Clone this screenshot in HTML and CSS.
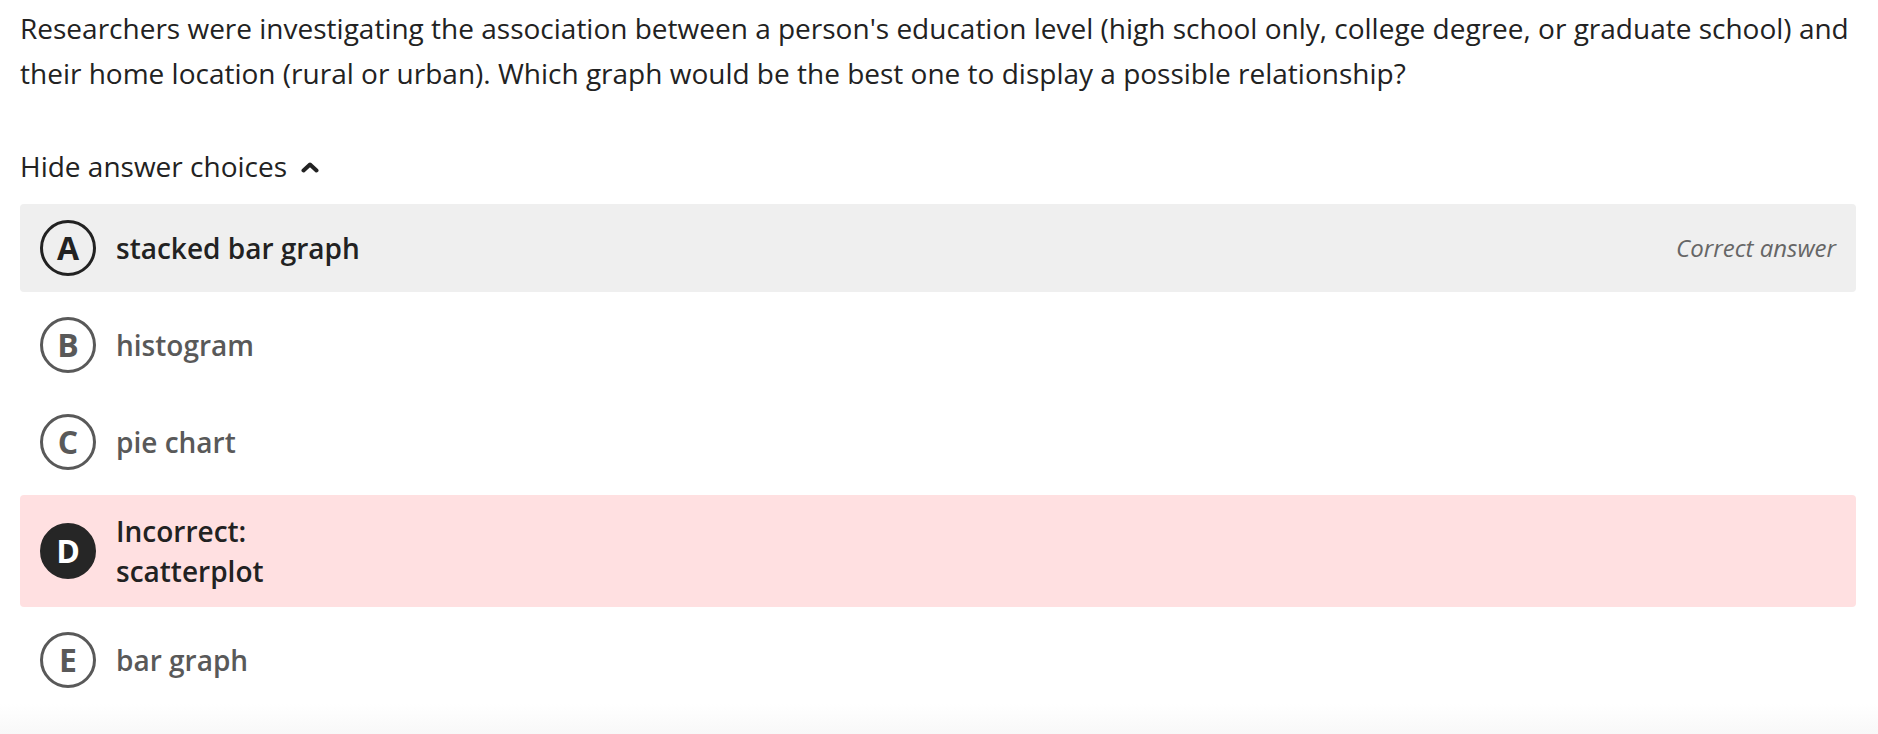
FILE: index.html
```html
<!DOCTYPE html>
<html lang="en">
<head>
<meta charset="utf-8">
<title>Question</title>
<link rel="stylesheet" href="styles.css">
</head>
<body>
<main class="page">
  <p class="question">Researchers were investigating the association between a person's education level (high school only, college degree, or graduate school) and their home location (rural or urban). Which graph would be the best one to display a possible relationship?</p>
  <button class="toggle" type="button">
    <span>Hide answer choices</span>
    <svg class="chevron" width="18" height="12" viewBox="0 0 18 12" aria-hidden="true"><polyline points="2.5,9.5 9,3.5 15.5,9.5" fill="none" stroke="#222" stroke-width="4" stroke-linecap="round" stroke-linejoin="round"/></svg>
  </button>
  <ul class="choices">
    <li class="choice choice--correct">
      <span class="badge badge--dark">A</span>
      <span class="label">stacked bar graph</span>
      <span class="note">Correct answer</span>
    </li>
    <li class="choice">
      <span class="badge">B</span>
      <span class="label">histogram</span>
    </li>
    <li class="choice">
      <span class="badge">C</span>
      <span class="label">pie chart</span>
    </li>
    <li class="choice choice--wrong">
      <span class="badge badge--filled">D</span>
      <span class="label label--stack"><span>Incorrect:</span><span>scatterplot</span></span>
    </li>
    <li class="choice">
      <span class="badge">E</span>
      <span class="label">bar graph</span>
    </li>
  </ul>
</main>
</body>
</html>
```
FILE: styles.css
```css
html, body {
  margin: 0;
  padding: 0;
}
body {
  font-family: "Open Sans", "Noto Sans", sans-serif;
  color: #222;
  background: linear-gradient(to bottom, #fff 0, #fff 704px, #f8f8f8 734px);
  min-height: 734px;
}
.page {
  padding: 6px 22px 0 20px;
}
.question {
  margin: 0;
  font-size: 28px;
  line-height: 45px;
  color: #222;
}
.toggle {
  display: flex;
  align-items: center;
  gap: 14px;
  margin: 50px 0 0;
  padding: 0;
  border: 0;
  background: none;
  font: inherit;
  font-size: 28px;
  line-height: 40px;
  color: #222;
}
.chevron {
  display: block;
  margin-top: 2px;
}
.choices {
  list-style: none;
  margin: 18px 0 0;
  padding: 0;
  display: flex;
  flex-direction: column;
  gap: 9px;
}
.choice {
  display: flex;
  align-items: center;
  gap: 20px;
  padding: 16px 20px;
  border-radius: 4px;
  font-size: 28px;
  font-weight: 600;
  line-height: 40px;
  color: #595959;
}
.choice--correct {
  background: #efefef;
  color: #222;
}
.choice--wrong {
  background: #ffe0e1;
  color: #222;
}
.badge {
  flex: none;
  box-sizing: border-box;
  width: 56px;
  height: 56px;
  border: 3px solid #595959;
  border-radius: 50%;
  display: flex;
  align-items: center;
  justify-content: center;
  font-size: 32px;
  font-weight: 700;
  line-height: 1;
  color: #595959;
}
.badge--dark {
  border-color: #222;
  color: #222;
}
.badge--filled {
  border-color: #262626;
  background: #262626;
  color: #fff;
}
.label {
  flex: 1;
}
.label--stack {
  display: flex;
  flex-direction: column;
}
.note {
  font-size: 24px;
  font-style: italic;
  font-weight: 400;
  color: #666;
}
```
